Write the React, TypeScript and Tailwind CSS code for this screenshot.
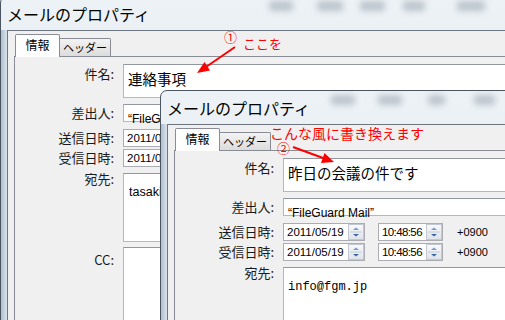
import React from "react";

const jp = "font-['Noto_Sans_CJK_JP',sans-serif]";
const sans = "font-['Liberation_Sans','Noto_Sans_CJK_JP',sans-serif]";
const mono = "font-['Liberation_Mono','Noto_Sans_CJK_JP',monospace]";

type Blob = { x: number; w: number };

function Spin() {
  return (
    <div className="w-[16px] h-[16px] shrink-0 border border-[#c3c8d0] bg-gradient-to-b from-[#f8f9fb] to-[#dde4ea]">
      <svg width="14" height="14" viewBox="0 0 14 14">
        <line x1="1" y1="7" x2="13" y2="7" stroke="#c5cbd3" />
        <path d="M4 5 L7 2.5 L10 5 Z" fill="#7b9cc6" />
        <path d="M4 9 L7 11.5 L10 9 Z" fill="#3c63a1" />
      </svg>
    </div>
  );
}

function DateBox({ text, wide }: { text: string; wide?: boolean }) {
  return (
    <div
      className={`h-[18px] shrink-0 border border-[#abadb3] bg-white flex items-center justify-between pl-[3px] ${
        wide ? "w-[82px]" : "w-[65px]"
      }`}
    >
      <span className={`${sans} text-[11.5px] leading-[16px] text-black ${wide ? "" : "tracking-[-0.6px]"}`}>{text}</span>
      <Spin />
    </div>
  );
}

function Row({
  label,
  mt,
  lpt,
  children,
}: {
  label: string;
  mt: string;
  lpt?: string;
  children: React.ReactNode;
}) {
  return (
    <div className={`flex ${mt}`}>
      <div
        className={`w-[102px] shrink-0 text-right pr-[3px] ${jp} text-[13px] leading-[18px] text-[#1a1a1a] ${lpt ?? ""}`}
      >
        {label}
      </div>
      <div className="ml-[6px] flex-1 flex">{children}</div>
    </div>
  );
}

const box = "bg-white border border-[#b3b8c0] border-t-[#9097a0]";

function Panel({ subject, to }: { subject: string; to: React.ReactNode }) {
  return (
    <div className="flex flex-col pt-[7px]">
      <Row label="件名:" mt="mt-0" lpt="pt-[1px]">
        <div className={`${box} h-[34px] flex-1 pl-[4px] pt-[2px]`}>
          <span className={`${jp} text-[14.5px] leading-[22px] text-black`}>{subject}</span>
        </div>
      </Row>
      <Row label="差出人:" mt="mt-[6px]">
        <div className={`${box} h-[18px] flex-1 pl-[4px]`}>
          <span className={`${sans} text-[12px] leading-[15px] text-black`}>“FileGuard Mail”</span>
        </div>
      </Row>
      <Row label="送信日時:" mt="mt-[7px]">
        <DateBox text="2011/05/19" wide />
        <div className="ml-[13px]">
          <DateBox text="10:48:56" />
        </div>
        <span className={`ml-[14px] ${sans} text-[11px] leading-[18px] text-black`}>+0900</span>
      </Row>
      <Row label="受信日時:" mt="mt-[2px]">
        <DateBox text="2011/05/19" wide />
        <div className="ml-[13px]">
          <DateBox text="10:48:56" />
        </div>
        <span className={`ml-[14px] ${sans} text-[11px] leading-[18px] text-black`}>+0900</span>
      </Row>
      <Row label="宛先:" mt="mt-[6px]" lpt="mt-[-3px]">
        <div className={`${box} h-[69px] flex-1 pl-[4px] pt-[4px]`}>{to}</div>
      </Row>
      <Row label="CC:" mt="mt-[5px]" lpt="pt-[4px]">
        <div className={`${box} h-[90px] flex-1`} />
      </Row>
    </div>
  );
}

function Window({
  pos,
  blobs,
  children,
}: {
  pos: string;
  blobs: Blob[];
  children: React.ReactNode;
}) {
  return (
    <div
      className={`absolute ${pos} w-[600px] h-[360px] rounded-t-[7px] border border-[#4a5561] bg-gradient-to-b from-[#edf2f6] to-[#d6e0e9] overflow-hidden flex flex-col`}
    >
      <div className="relative h-[33px] shrink-0 pl-[6px] pt-[7px]">
        {blobs.map((b, i) => (
          <div
            key={i}
            className="absolute top-[4px] h-[10px] rounded-[3px] bg-[#8d99a5] opacity-50 blur-[3px]"
            style={{ left: b.x, width: b.w }}
          />
        ))}
        <div className={`relative ${jp} text-[16px] leading-[20px] text-black`}>メールのプロパティ</div>
      </div>
      <div className="flex flex-1">
        <div className="w-[6px] shrink-0 bg-gradient-to-r from-[#aebfd1] to-[#dbe4ec]" />
        <div className="flex-1 bg-[#f0f0f0] border-t border-l border-[#6d7680] pl-[6px] flex flex-col">
          <div className="h-[25px] shrink-0 flex items-end pl-[1px]">
            <div
              className={`relative z-10 h-[23px] mb-[-1px] w-[45px] bg-white border border-b-0 border-[#898c95] rounded-t-[2px] text-center ${jp} text-[12px] leading-[20px] text-black`}
            >
              情報
            </div>
            <div
              className={`h-[18px] w-[51px] bg-gradient-to-b from-[#f3f3f3] to-[#dcdcdc] border border-l-0 border-b-0 border-[#898c95] rounded-tr-[2px] text-center ${jp} text-[11px] leading-[16px] text-black`}
            >
              ヘッダー
            </div>
          </div>
          <div className="flex-1 border-t border-l border-[#898c95] bg-[#f0f0f0]">{children}</div>
        </div>
      </div>
    </div>
  );
}

export default function App() {
  return (
    <div className="relative w-[505px] h-[320px] overflow-hidden bg-[#dfe7ef]">
      <Window
        pos="left-0 top-[-4px]"
        blobs={[
          { x: 268, w: 24 },
          { x: 316, w: 26 },
          { x: 359, w: 25 },
          { x: 402, w: 22 },
          { x: 456, w: 28 },
        ]}
      >
        <Panel
          subject="連絡事項"
          to={<span className={`${sans} text-[12.5px] leading-[16px] text-black pl-[1px]`}>tasaki@fgm.jp</span>}
        />
      </Window>
      <Window
        pos="left-[160px] top-[90px]"
        blobs={[
          { x: 170, w: 24 },
          { x: 217, w: 24 },
          { x: 267, w: 17 },
          { x: 313, w: 21 },
        ]}
      >
        <Panel
          subject="昨日の会議の件です"
          to={<span className={`${mono} text-[12px] leading-[16px] text-black pt-[3px] inline-block`}>info@fgm.jp</span>}
        />
      </Window>

      <div className={`absolute left-[224px] top-[29px] ${jp} text-[13px] leading-[16px] text-[#ff0000]`}>①</div>
      <div className={`absolute left-[243px] top-[36px] ${jp} text-[13px] leading-[16px] text-[#ff0000]`}>ここを</div>
      <div className={`absolute left-[270px] top-[124px] ${jp} text-[14px] leading-[18px] text-[#ff0000]`}>
        こんな風に書き換えます
      </div>
      <div className={`absolute left-[277px] top-[140px] ${jp} text-[13px] leading-[16px] text-[#ff0000]`}>②</div>
      <svg className="absolute left-0 top-0 pointer-events-none" width="505" height="320">
        <line x1="235" y1="47" x2="206" y2="67" stroke="#ff0000" strokeWidth="2" />
        <polygon points="197,73 210,70.5 204.5,62" fill="#ff0000" />
        <line x1="293" y1="147" x2="323" y2="158" stroke="#ff0000" strokeWidth="2" />
        <polygon points="334,162 321,163 324.5,153" fill="#ff0000" />
      </svg>
    </div>
  );
}
